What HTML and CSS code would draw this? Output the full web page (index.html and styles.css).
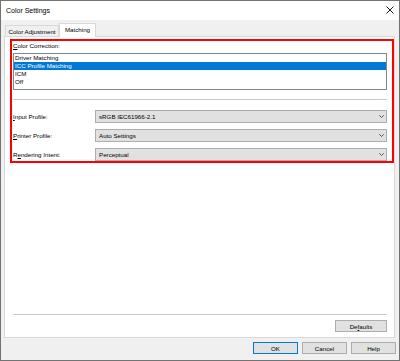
FILE: index.html
```html
<!DOCTYPE html>
<html lang="en">
<head>
  <meta charset="UTF-8" />
  <title>Color Settings</title>
  <link rel="stylesheet" href="styles.css">
</head>
<body>

  <div class="window" role="dialog" aria-label="Color Settings">
    <div class="titlebar">
      <span class="title">Color Settings</span>
      <svg class="close" width="8" height="8" viewBox="0 0 8 8" aria-label="Close">
        <path d="M0.5 0.5 L7.5 7.5 M7.5 0.5 L0.5 7.5" stroke="#1a1a1a" stroke-width="1" fill="none"/>
      </svg>
    </div>

    <div class="tabs">
      <div class="tab">Color Adjustment</div>
      <div class="tab active">Matching</div>
    </div>

    <div class="panel">
      <div class="highlight">
        <div class="caption"><u>C</u>olor Correction:</div>
        <ul class="listbox">
          <li>Driver Matching</li>
          <li class="selected">ICC Profile Matching</li>
          <li>ICM</li>
          <li>Off</li>
        </ul>

        <div class="sep"></div>

        <div class="fields">
          <div class="field">
            <label><u>I</u>nput Profile:</label>
            <div class="combo">
              <span>sRGB IEC61966-2.1</span>
              <svg width="5" height="3" viewBox="0 0 5 3"><path d="M0.3 0.3 L2.5 2.5 L4.7 0.3" stroke="#444" stroke-width="0.9" fill="none"/></svg>
            </div>
          </div>
          <div class="field">
            <label><u>P</u>rinter Profile:</label>
            <div class="combo">
              <span>Auto Settings</span>
              <svg width="5" height="3" viewBox="0 0 5 3"><path d="M0.3 0.3 L2.5 2.5 L4.7 0.3" stroke="#444" stroke-width="0.9" fill="none"/></svg>
            </div>
          </div>
          <div class="field">
            <label>R<u>e</u>ndering Intent:</label>
            <div class="combo">
              <span>Perceptual</span>
              <svg width="5" height="3" viewBox="0 0 5 3"><path d="M0.3 0.3 L2.5 2.5 L4.7 0.3" stroke="#444" stroke-width="0.9" fill="none"/></svg>
            </div>
          </div>
        </div>
      </div>

      <div class="spacer"></div>
      <div class="sep bottom"></div>
      <div class="defaults-row">
        <button class="btn defaults">De<u>f</u>aults</button>
      </div>
    </div>

    <div class="actions">
      <button class="btn primary">OK</button>
      <button class="btn">Cancel</button>
      <button class="btn">Help</button>
    </div>
  </div>

</body>
</html>
```

FILE: styles.css
```css
* {
  box-sizing: border-box;
  font-family: 'Liberation Sans', Arial, sans-serif;
}

body {
  margin: 0;
  background: #ffffff;
}

.window {
  width: 400px;
  height: 361px;
  border: 1px solid #737373;
  background: #f0f0f0;
  display: flex;
  flex-direction: column;
  color: #000;
  font-size: 6.2px;
}

/* Title bar */
.titlebar {
  height: 19px;
  flex: none;
  background: #ffffff;
  display: flex;
  align-items: center;
  justify-content: space-between;
  padding: 0 5px 1px 5px;
}

.title {
  font-size: 7px;
}

.close {
  display: block;
}

/* Tabs */
.tabs {
  flex: none;
  display: flex;
  align-items: flex-end;
  margin-top: 3px;
  padding-left: 4px;
  height: 13px;
}

.tab {
  height: 11px;
  border: 1px solid #d9d9d9;
  border-bottom: none;
  background: #f0f0f0;
  display: flex;
  align-items: center;
  justify-content: center;
  width: 54px;
}

.tab.active {
  width: 37px;
  height: 14px;
  margin-bottom: -1px;
  background: #ffffff;
  position: relative;
  z-index: 1;
  padding-bottom: 2px;
}

/* Tab page */
.panel {
  flex: 1;
  margin: 0 4px 0 3px;
  border: 1px solid #d9d9d9;
  background: #ffffff;
  display: flex;
  flex-direction: column;
}

.highlight {
  margin: 2px 0 0 5px;
  border: 2px solid #ff0000;
  padding: 1px 5px 0 1px;
}

.caption {
  line-height: 8px;
  margin-bottom: 3px;
}

.listbox {
  list-style: none;
  margin: 0;
  padding: 0 0 3px 0;
  border: 1px solid #828790;
}

.listbox li {
  height: 8px;
  line-height: 8px;
  padding-left: 1px;
}

.listbox li.selected {
  background: #0078d7;
  color: #ffffff;
}

.sep {
  height: 1px;
  background: #c8c8c8;
  margin-top: 9px;
}

.fields {
  display: flex;
  flex-direction: column;
  gap: 6px;
  margin-top: 10px;
}

.field {
  display: flex;
  align-items: center;
}

.field label {
  width: 82px;
  flex: none;
}

.combo {
  flex: 1;
  height: 13px;
  background: #e1e1e1;
  border: 1px solid #adadad;
  display: flex;
  align-items: center;
  justify-content: space-between;
  padding: 0 2px 0 3px;
}

.combo svg {
  display: block;
}

.spacer {
  flex: 1;
}

.sep.bottom {
  margin: 0 7px 5px 8px;
}

.defaults-row {
  display: flex;
  justify-content: flex-end;
  padding: 0 7px 5px 0;
}

/* Buttons */
.btn {
  height: 12px;
  width: 45px;
  padding: 0;
  font-size: 6.2px;
  color: #000;
  background: #e1e1e1;
  border: 1px solid #adadad;
  border-radius: 0;
}

.btn.defaults {
  width: 52px;
}

.btn.primary {
  border-color: #0078d7;
}

.actions {
  flex: none;
  height: 22px;
  display: flex;
  justify-content: flex-end;
  gap: 4px;
  padding: 4px 3px 6px 0;
}
```
